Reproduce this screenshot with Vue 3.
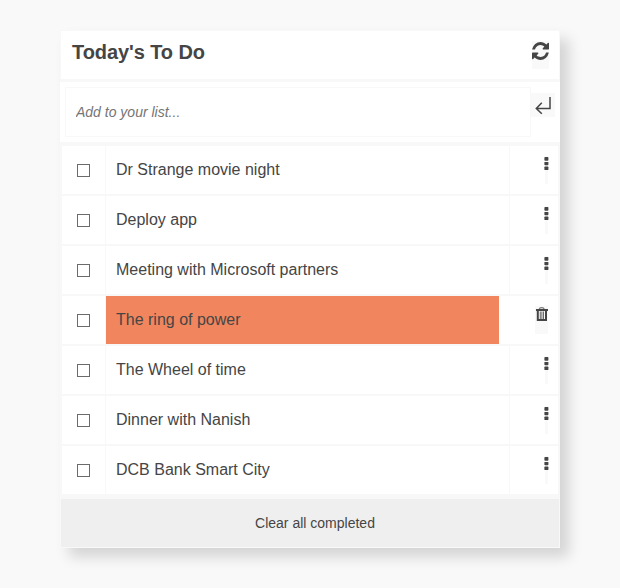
<script setup>
import { ref } from 'vue'

const tasks = ref([
  { text: 'Dr Strange movie night', selected: false },
  { text: 'Deploy app', selected: false },
  { text: 'Meeting with Microsoft partners', selected: false },
  { text: 'The ring of power', selected: true },
  { text: 'The Wheel of time', selected: false },
  { text: 'Dinner with Nanish', selected: false },
  { text: 'DCB Bank Smart City', selected: false },
])
</script>

<template>
  <main class="page">
    <section class="card">
      <header class="header">
        <h1 class="title">Today's To Do</h1>
        <span class="refresh">
          <svg width="17" height="18" viewBox="0 0 1536 1536" preserveAspectRatio="none" fill="#454545">
            <path d="M1511 928q0 5-1 7-64 268-268 434.5t-478 166.5q-146 0-282.5-55t-243.5-157l-129 129q-19 19-45 19t-45-19-19-45v-448q0-26 19-45t45-19h448q26 0 45 19t19 45-19 45l-137 137q71 66 161 102t187 36q134 0 250-65t186-179q11-17 53-117 8-23 30-23h192q13 0 22.5 9.5t9.5 22.5zm25-800v448q0 26-19 45t-45 19h-448q-26 0-45-19t-19-45 19-45l138-138q-148-137-349-137-134 0-250 65t-186 179q-11 17-53 117-8 23-30 23h-199q-13 0-22.5-9.5t-9.5-22.5v-7q65-268 270-434.5t480-166.5q146 0 284 55.5t245 156.5l130-129q19-19 45-19t45 19 19 45z" />
          </svg>
        </span>
      </header>

      <form class="entry" @submit.prevent>
        <input class="field" type="text" placeholder="Add to your list..." />
        <span class="enter">
          <svg width="24" height="24" viewBox="0 0 24 24" fill="none" stroke="#454545" stroke-width="1.5">
            <path d="M19 4v11.5H5.5M10.8 9.8l-5.5 5.7 5.5 5.3" />
          </svg>
        </span>
      </form>

      <ul class="list">
        <li v-for="task in tasks" :key="task.text" class="row" :class="{ selected: task.selected }">
          <span class="check"><span class="box"></span></span>
          <span class="text">{{ task.text }}</span>
          <span class="action">
            <span v-if="task.selected" class="trash">
              <svg width="13" height="15" viewBox="0 0 13 15">
                <path d="M4.4 2.6V1.9Q4.6.7 6.7.7T9 1.9v.7" fill="none" stroke="#777" stroke-width="1.3" />
                <path d="M1 2h12v2H1z" fill="#454545" />
                <path d="M2.8 4v9.1H11V4" fill="none" stroke="#454545" stroke-width="2" />
                <path d="M5.3 4.5v8M6.9 4.5v8M8.5 4.5v8" fill="none" stroke="#454545" stroke-width=".8" />
              </svg>
            </span>
            <span v-else class="dots">
              <svg width="5" height="14" viewBox="0 0 5 14" fill="#454545">
                <rect x=".4" y="0" width="4" height="3.8" rx=".7" />
                <rect x=".4" y="4.9" width="4" height="3.3" rx=".7" />
                <rect x=".4" y="9.5" width="4" height="3.6" rx=".7" />
              </svg>
            </span>
          </span>
        </li>
      </ul>

      <button class="clear" type="button">Clear all completed</button>
    </section>
  </main>
</template>

<style>
body {
  background: #f9f9f9;
}
</style>

<style scoped>
.page {
  box-sizing: border-box;
  height: 588px;
  padding: 30px 60px;
  font-family: "Liberation Sans", Arial, sans-serif;
  color: #454545;
}
.card {
  box-sizing: border-box;
  height: 518px;
  padding-top: 1px;
  background: #f8f8f8;
  box-shadow: 9px 9px 13px rgba(0, 0, 0, 0.15);
}
.header {
  display: flex;
  justify-content: space-between;
  box-sizing: border-box;
  height: 48px;
  margin: 0 1px 3px;
  padding: 10px 10px 0 11px;
  background: #fff;
}
.title {
  margin: 0;
  font-size: 20px;
  line-height: 23px;
  letter-spacing: -0.08px;
}
.refresh {
  box-sizing: border-box;
  width: 17px;
  height: 28px;
  padding-top: 1px;
  background: #f9f9f9;
}
svg {
  display: block;
  overflow: visible;
}
.entry {
  display: flex;
  box-sizing: border-box;
  height: 60px;
  padding: 5px;
  background: #fff;
}
.field {
  box-sizing: border-box;
  width: 466px;
  height: 50px;
  padding: 0 10px;
  border: 1px solid #f8f8f8;
  outline: none;
  background: #fff;
  font: italic 14px "Liberation Sans", Arial, sans-serif;
}
.field::placeholder {
  color: #757575;
}
.enter {
  width: 24px;
  height: 24px;
  margin-top: 6px;
  background: #f9f9f9;
}
.list {
  display: grid;
  gap: 2px;
  margin: 4px 2px 5px;
  padding: 0;
  list-style: none;
}
.row {
  display: flex;
  height: 48px;
  background: #fff;
  font-size: 16px;
  line-height: 47px;
}
.check {
  box-sizing: border-box;
  width: 44px;
  padding: 18px 0 0 15px;
  border-right: 1px solid #f8f8f8;
}
.box {
  display: block;
  box-sizing: border-box;
  width: 13px;
  height: 13px;
  border: 1px solid #6b6b6b;
}
.text {
  box-sizing: border-box;
  width: 393px;
  padding-left: 10px;
}
.selected .text {
  background: #f1865e;
}
.action {
  display: flex;
  flex: 1;
  justify-content: flex-end;
  box-sizing: border-box;
  margin-left: 10px;
  padding: 10px 10px 0 0;
  border-left: 1px solid #f8f8f8;
}
.selected .action {
  border-left-color: transparent;
}
.dots {
  width: 3px;
  height: 28px;
  background: #f9f9f9;
}
.dots svg {
  margin: 1px 0 0 -1px;
}
.trash {
  width: 13px;
  height: 28px;
  background: #f9f9f9;
}
.trash svg {
  margin-top: 1px;
}
.clear {
  display: block;
  width: 498px;
  height: 48px;
  margin: 0 1px;
  padding: 0 0 0 10px;
  border: 0;
  background: #efefef;
  color: #454545;
  font: 14px "Liberation Sans", Arial, sans-serif;
}
</style>
